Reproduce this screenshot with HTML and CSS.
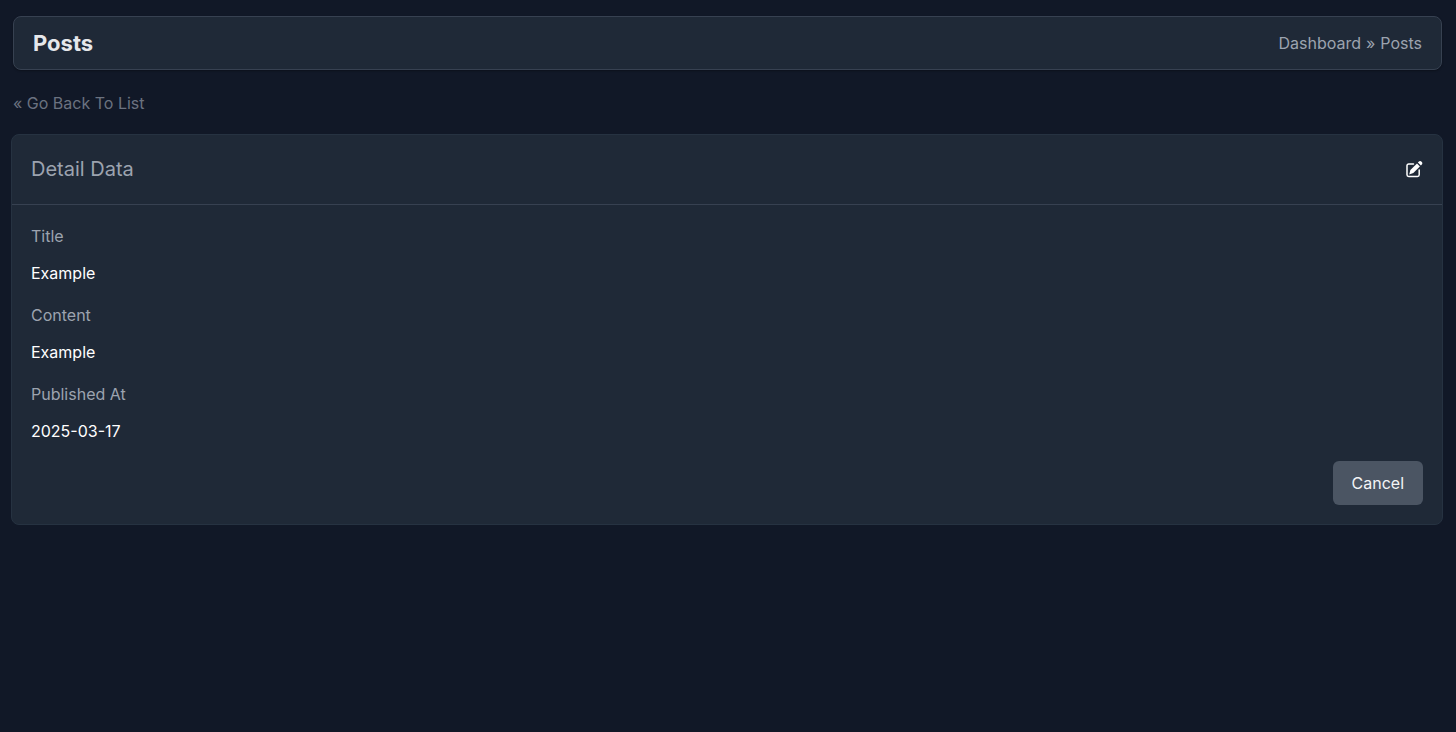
FILE: index.html
```html
<!DOCTYPE html>
<html lang="en">
<head>
    <meta charset="utf-8">
    <meta name="viewport" content="width=device-width, initial-scale=1">
    <title>Posts</title>
    <link rel="stylesheet" href="styles.css">
</head>

<body>

    <header class="page-header">
        <h1>Posts</h1>
        <nav class="breadcrumb">
            <a href="#">Dashboard</a>
            <span>»</span>
            <a href="#">Posts</a>
        </nav>
    </header>

    <main>
        <a class="back-link" href="#">« Go Back To List</a>

        <section class="card">
            <div class="card-header">
                <h2>Detail Data</h2>
                <a class="edit-link" href="#" aria-label="Edit">
                    <svg viewBox="0 0 18 18" width="18" height="18">
                        <path d="M8.500 3H3.700A1.700 1.700 0 0 0 2 4.700v9.100A1.700 1.700 0 0 0 3.700 15.500h8.800a1.700 1.700 0 0 0 1.700-1.700V9" fill="none" stroke="currentColor" stroke-width="1.500" stroke-linecap="round"/>
                        <path d="M12 2.500l2.900 2.900-6.600 6.700-4.100 1.300 1.200-4.300z"/>
                        <path d="M12.900 1.500l.7-.7a2.100 2.100 0 0 1 3 3l-.7.700z"/>
                    </svg>
                </a>
            </div>

            <div class="card-body">
                <dl class="details">
                    <dt>Title</dt>
                    <dd>Example</dd>
                    <dt>Content</dt>
                    <dd>Example</dd>
                    <dt>Published At</dt>
                    <dd>2025-03-17</dd>
                </dl>
                <div class="actions">
                    <button type="button" class="btn">Cancel</button>
                </div>
            </div>
        </section>
    </main>

</body>
</html>
```
FILE: styles.css
```css
* {
    box-sizing: border-box;
}

body {
    margin: 0;
    padding: 16px 14px 16px 13px;
    background-color: #111827;
    color: #9ca3af;
    font-family: Inter, "Liberation Sans", sans-serif;
    font-size: 16px;
    line-height: 24px;
}

a {
    color: inherit;
    text-decoration: none;
}

h1,
h2 {
    margin: 0;
}

.page-header {
    display: flex;
    justify-content: space-between;
    align-items: center;
    padding: 10px 19px;
    border: 1px solid #374151;
    border-radius: 8px;
    background-color: #1f2937;
    box-shadow: 0 1px 2px rgba(0, 0, 0, 0.3);
}

.page-header h1 {
    color: #e5e7eb;
    font-size: 22px;
    font-weight: 700;
    line-height: 32px;
}

.breadcrumb {
    display: flex;
    gap: 5px;
}

.back-link {
    display: inline-block;
    margin: 21px 0 19px;
    color: #6b7280;
}

.card {
    border: 1px solid #263241;
    border-radius: 8px;
    background-color: #1f2937;
    margin: 0 -1px 0 -2px;
}

.card-header {
    display: flex;
    justify-content: space-between;
    align-items: center;
    padding: 20px 19px;
    border-bottom: 1px solid #374151;
}

.card-header h2 {
    font-size: 20px;
    font-weight: 400;
    line-height: 29px;
}

.edit-link {
    display: flex;
    color: #fff;
}

.edit-link svg {
    fill: currentColor;
}

.card-body {
    padding: 19px;
}

.details {
    margin: 0;
}

.details dt {
    margin-bottom: 13px;
}

.details dd {
    margin: 0 0 18px;
    color: #fff;
}

.actions {
    display: flex;
    justify-content: flex-end;
}

.btn {
    padding: 10px 19px;
    border: 0;
    border-radius: 6px;
    background-color: #4b5563;
    color: #f3f4f6;
    font: inherit;
}
```
